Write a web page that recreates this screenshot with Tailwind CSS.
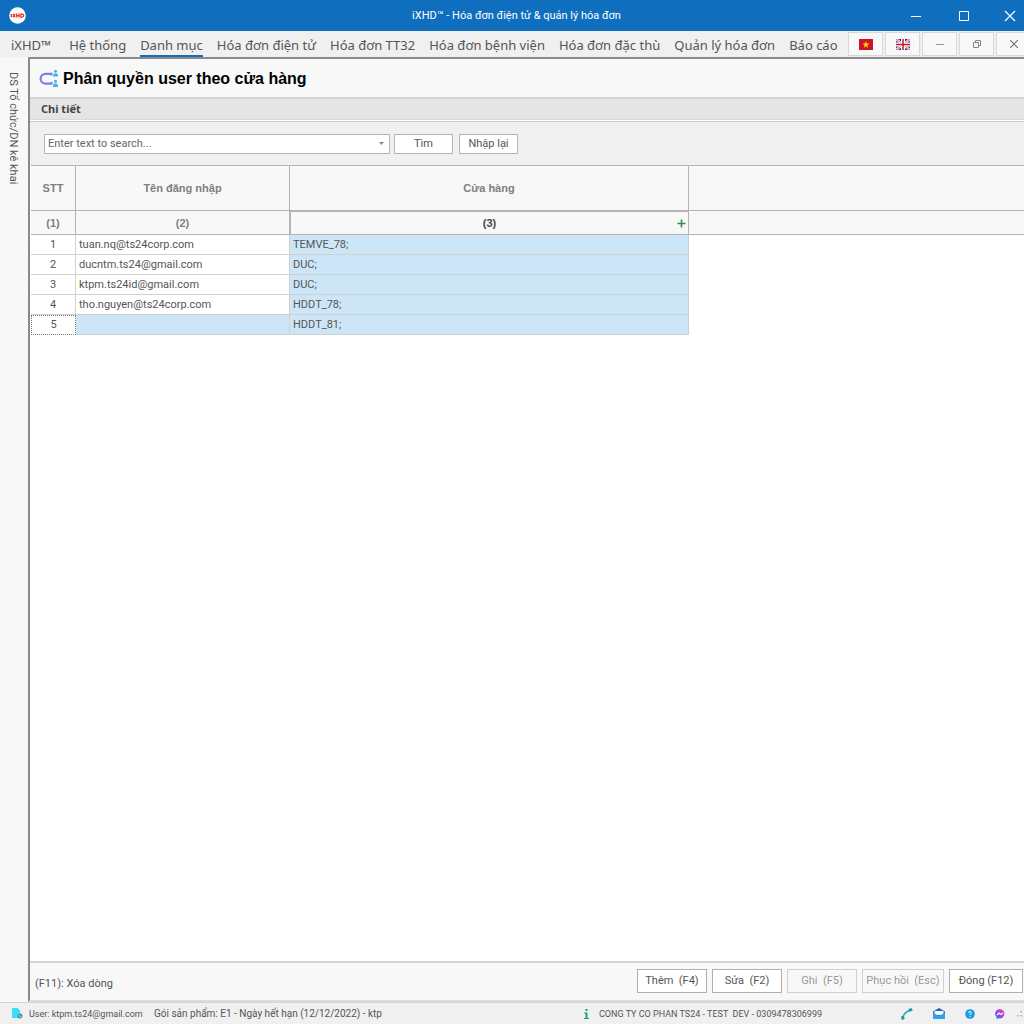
<!DOCTYPE html>
<html lang="vi">
<head>
<meta charset="utf-8">
<title>iXHD™ - Hóa đơn điện tử &amp; quản lý hóa đơn</title>
<script src="https://cdn.jsdelivr.net/npm/@tailwindcss/browser@4"></script>
</head>
<body class="flex h-screen flex-col overflow-hidden bg-[#f0f0f0] font-[Roboto,sans-serif] text-[11px] leading-4 text-[#555]">

<header class="flex h-[31px] shrink-0 items-center bg-[#106ebe] text-white">
  <div class="flex flex-1 pl-[9px]">
    <svg class="size-[17px]" viewBox="0 0 17 17" aria-label="iXHD"><circle cx="8.500" cy="8.500" r="8.300" fill="#fff"/><g fill="none" stroke="#e8352c" stroke-width="1.300"><path d="M2.300 7v3.200M3.800 7l2.400 3.200M6.200 7 3.800 10.200M7.700 6.600v4M10.100 6.600v4M7.700 8.600h2.400M11.900 7.100h1.200q1.700 0 1.700 1.500t-1.700 1.500h-1.200z"/></g></svg>
  </div>
  <h1>iXHD™ - Hóa đơn điện tử &amp; quản lý hóa đơn</h1>
  <div class="flex flex-1 justify-end">
    <button aria-label="Thu nhỏ" class="flex h-[31px] w-12 items-center justify-center"><svg class="size-3" viewBox="0 0 12 12"><path d="M1 6.500h10" stroke="#fff"/></svg></button>
    <button aria-label="Phóng to" class="flex h-[31px] w-12 items-center justify-center"><svg class="size-3" viewBox="0 0 12 12"><path d="M1.500 1.500h9v9h-9z" fill="none" stroke="#fff"/></svg></button>
    <button aria-label="Đóng" class="flex h-[31px] w-9 items-center justify-center pl-2"><svg class="size-3" viewBox="0 0 12 12"><path d="m1 1 10 10M11 1 1 11" stroke="#fff" stroke-width="1.200"/></svg></button>
  </div>
</header>

<nav class="flex h-[26px] shrink-0 items-center justify-between overflow-hidden">
  <div class="flex h-full gap-[14px] pl-[11px] font-['Noto_Sans',sans-serif] text-[13px] leading-[24px] whitespace-nowrap">
    <a href="#" class="mr-1 pt-0.5">iXHD™</a>
    <a href="#" class="pt-0.5">Hệ thống</a>
    <a href="#" class="border-b-2 border-[#106ebe] pt-0.5">Danh mục</a>
    <a href="#" class="pt-0.5">Hóa đơn điện tử</a>
    <a href="#" class="pt-0.5">Hóa đơn TT32</a>
    <a href="#" class="pt-0.5">Hóa đơn bệnh viện</a>
    <a href="#" class="pt-0.5">Hóa đơn đặc thù</a>
    <a href="#" class="pt-0.5">Quản lý hóa đơn</a>
    <a href="#" class="pt-0.5">Báo cáo</a>
  </div>
  <div class="-mr-[7px] flex shrink-0 gap-0.5">
    <button aria-label="Tiếng Việt" class="flex h-6 w-[35px] items-center justify-center border border-[#d8d8d8] bg-[#f8f8f8]"><svg class="h-[11px] w-[14px]" viewBox="0 0 14 11"><path d="M0 0h14v11H0z" fill="#d01128"/><path d="m7 2 .9 2.600h2.600L8.400 6.200l.8 2.600L7 7.200 4.800 8.800l.8-2.600-2.100-1.600h2.600z" fill="#fd0"/></svg></button>
    <button aria-label="English" class="flex h-6 w-[35px] items-center justify-center border border-[#d8d8d8] bg-[#f8f8f8]"><svg class="h-[11px] w-[14px]" viewBox="0 0 14 11"><path d="M0 0h14v11H0z" fill="#2b3a94"/><path d="m0 0 14 11M14 0 0 11" stroke="#fff" stroke-width="2.200"/><path d="m0 0 14 11M14 0 0 11" stroke="#d01128" stroke-width=".7"/><path d="M7 0v11M0 5.500h14" stroke="#fff" stroke-width="4"/><path d="M7 0v11M0 5.500h14" stroke="#d01128" stroke-width="1.500"/></svg></button>
    <button aria-label="Thu nhỏ cửa sổ con" class="flex h-6 w-[35px] items-center justify-center border border-[#d8d8d8] bg-[#f8f8f8]"><svg class="h-[10px] w-2" viewBox="0 0 8 10"><path d="M0 5.500h8" stroke="#999"/></svg></button>
    <button aria-label="Khôi phục cửa sổ con" class="flex h-6 w-[35px] items-center justify-center border border-[#d8d8d8] bg-[#f8f8f8]"><svg class="size-2" viewBox="0 0 8 8"><path d="M.5 2.500h5v5h-5zM2.500 2.500v-2h5v5h-2" fill="none" stroke="#888"/></svg></button>
    <button aria-label="Đóng cửa sổ con" class="flex h-6 w-[35px] items-center justify-center border border-[#d8d8d8] bg-[#f8f8f8]"><svg class="size-2" viewBox="0 0 8 8"><path d="m0 0 8 8M8 0 0 8" stroke="#777" stroke-width="1.200"/></svg></button>
  </div>
</nav>

<div class="flex min-h-0 flex-1">
  <aside class="flex w-7 shrink-0 items-start bg-[#f8f8f8] pt-[15px] pl-[5px]">
    <a href="#" class="whitespace-nowrap [writing-mode:vertical-rl]">DS Tổ chức/DN kê khai</a>
  </aside>
  <main class="flex min-w-0 flex-1 flex-col border-t-2 border-b-2 border-l-2 border-t-[#8a8a8a] border-b-[#dcdcdc] border-l-[#8a8a8a] bg-white">
    <div class="flex h-[38px] shrink-0 items-center gap-1 bg-[#f8f8f8] pt-0.5 pl-[9px]">
      <svg class="h-5 w-5" viewBox="0 0 20 20" fill="none"><path d="M12.500 6.500V4.800H6.500a4.900 4.900 0 0 0 0 9.800h6v-1.600" stroke="#7a80e4" stroke-width="2.200"/><g fill="#3db4ea"><circle cx="16.500" cy="2.300" r="1.500"/><path d="M14 7.500q0-3.200 2.500-3.200t2.500 3.200z"/><circle cx="16.500" cy="12.300" r="1.500"/><path d="M14 18q0-3.700 2.500-3.700t2.500 3.700z"/></g></svg>
      <h2 class="font-['Liberation_Sans',sans-serif] text-base leading-5 font-bold text-black">Phân quyền user theo cửa hàng</h2>
    </div>
    <h3 class="h-[23px] shrink-0 border-t-2 border-b border-t-[#d2d2d2] border-b-[#d8d8d8] bg-[#e5e5e5] pl-[11px] font-['Noto_Sans',sans-serif] leading-[20px] font-bold text-[#444]">Chi tiết</h3>
    <form class="mt-px flex h-[44px] shrink-0 items-center border-t border-[#c8c8c8] bg-[#f0f0f0] pl-[14px]">
      <div class="flex h-5 w-[346px] items-center border border-[#b4b4b4] bg-white">
        <input type="text" aria-label="Tìm kiếm" placeholder="Enter text to search..." class="h-full min-w-0 flex-1 pl-[3px] text-[11px] outline-none placeholder:text-[#666]">
        <button type="button" aria-label="Mở danh sách" class="flex h-full w-[15px] items-center justify-center"><svg class="h-[3px] w-[5px]" viewBox="0 0 5 3"><path d="M0 0h5L2.500 3z" fill="#888"/></svg></button>
      </div>
      <button type="button" class="ml-1 h-5 w-[59px] border border-[#b4b4b4] bg-white">Tìm</button>
      <button type="reset" class="ml-[6px] h-5 w-[59px] border border-[#b4b4b4] bg-white">Nhập lại</button>
    </form>
    <div class="min-h-0 flex-1 pl-px">
      <table class="w-full table-fixed border-separate border-spacing-0 text-left">
        <colgroup><col class="w-[45px]"><col class="w-[214px]"><col class="w-[399px]"><col></colgroup>
        <thead class="bg-[#f8f8f8] text-center font-['Liberation_Sans',sans-serif] text-[#808080]">
          <tr class="h-[46px]">
            <th class="border-y border-r border-[#b4b4b4]">STT</th>
            <th class="border-y border-r border-[#b4b4b4]">Tên đăng nhập</th>
            <th class="border-y border-r border-[#b4b4b4]">Cửa hàng</th>
            <td class="border-y border-[#b4b4b4]"></td>
          </tr>
          <tr class="h-6">
            <th class="border-r border-b border-[#b4b4b4]">(1)</th>
            <th class="border-r border-b border-[#b4b4b4]">(2)</th>
            <th class="relative border-t border-r border-b border-l border-[#b4b4b4] text-[#444]">(3)<button aria-label="Thêm cửa hàng" class="absolute top-[7px] right-[2px]"><svg class="size-[9px]" viewBox="0 0 9 9"><path d="M4.500.5v8M.5 4.500h8" stroke="#2f9148" stroke-width="1.600"/></svg></button></th>
            <td class="border-b border-[#b4b4b4]"></td>
          </tr>
        </thead>
        <tbody>
          <tr class="h-5"><td class="border-r border-b border-[#d0d0d0] text-center">1</td><td class="border-r border-b border-[#d0d0d0] pl-[3px]">tuan.nq@ts24corp.com</td><td class="border-r border-b border-[#d0d0d0] bg-[#cde6f7] pl-[3px]">TEMVE_78;</td><td></td></tr>
          <tr class="h-5"><td class="border-r border-b border-[#d0d0d0] text-center">2</td><td class="border-r border-b border-[#d0d0d0] pl-[3px]">ducntm.ts24@gmail.com</td><td class="border-r border-b border-[#d0d0d0] bg-[#cde6f7] pl-[3px]">DUC;</td><td></td></tr>
          <tr class="h-5"><td class="border-r border-b border-[#d0d0d0] text-center">3</td><td class="border-r border-b border-[#d0d0d0] pl-[3px]">ktpm.ts24id@gmail.com</td><td class="border-r border-b border-[#d0d0d0] bg-[#cde6f7] pl-[3px]">DUC;</td><td></td></tr>
          <tr class="h-5"><td class="border-r border-b border-[#d0d0d0] text-center">4</td><td class="border-r border-b border-[#d0d0d0] pl-[3px]">tho.nguyen@ts24corp.com</td><td class="border-r border-b border-[#d0d0d0] bg-[#cde6f7] pl-[3px]">HDDT_78;</td><td></td></tr>
          <tr class="h-5"><td class="border border-dotted border-[#777] text-center">5</td><td class="border-r border-b border-[#d0d0d0] bg-[#cde6f7]"></td><td class="border-r border-b border-[#d0d0d0] bg-[#cde6f7] pl-[3px]">HDDT_81;</td><td></td></tr>
        </tbody>
      </table>
    </div>
    <div class="flex h-[39px] shrink-0 items-center justify-between border-t-2 border-[#d4d4d4] bg-[#f8f8f8] pl-[5px]">
      <span class="pt-1">(F11): Xóa dòng</span>
      <div class="flex gap-[5px] pr-px pb-0.5 whitespace-pre">
        <button class="h-6 w-[70px] border border-[#b0b0b0] bg-white">Thêm  (F4)</button>
        <button class="h-6 w-[70px] border border-[#b0b0b0] bg-white">Sửa  (F2)</button>
        <button disabled class="h-6 w-[70px] border border-[#d0d0d0] text-[#999]">Ghi  (F5)</button>
        <button disabled class="h-6 w-[82px] border border-[#d0d0d0] text-[#999]">Phục hồi  (Esc)</button>
        <button class="h-6 w-[74px] border border-[#b0b0b0] bg-white">Đóng (F12)</button>
      </div>
    </div>
  </main>
</div>

<footer class="flex h-[22px] shrink-0 items-center border-t border-[#d4d4d4] pl-3 text-[10px] whitespace-pre">
  <svg class="size-[11px]" viewBox="0 0 11 11"><path d="M0 0h5.500L8 2.500V10H0z" fill="#3fdcf5"/><circle cx="8" cy="8" r="2.500" fill="#3a9aa8"/><path d="m6.500 7 3 2.500" stroke="#eee" stroke-width=".7"/></svg>
  <span class="ml-[6px] w-[109px] text-[9px]">User: ktpm.ts24@gmail.com</span>
  <span class="ml-4 flex-1">Gói sản phẩm: E1 - Ngày hết hạn (12/12/2022) - ktp</span>
  <svg class="h-[10px] w-[5px]" viewBox="0 0 5 10"><path d="M1.500 0h2v2h-2zM0 3.500h3.500V9H5v1H0V9h1.500V4.500H0z" fill="#21a366"/></svg>
  <span class="ml-[10px] w-[220px] text-[9px]">CONG TY CO PHAN TS24 - TEST  DEV - 0309478306999</span>
  <div class="ml-[82px] flex items-center gap-5 pr-0.5">
    <a href="#" aria-label="Điện thoại"><svg class="size-3" viewBox="0 0 12 12"><path d="M2 10Q2.500 4 10 2" fill="none" stroke="#22aeb0" stroke-width="1.600"/><path d="m7.500 .8 3.300-.6.9 2.300-3.200 1.300zM.2 8.200l2.800-.4.6 3.200-3 .9z" fill="#1598a0"/></svg></a>
    <a href="#" aria-label="Thư"><svg class="size-3" viewBox="0 0 12 12"><path d="M0 3.500 6 0l6 3.500V11H0z" fill="#1769bd"/><path d="M1.500 3h9v4h-9z" fill="#fff"/><path d="M0 4.500 6 8l6-3.500V11H0z" fill="#2ea3ea"/></svg></a>
    <a href="#" aria-label="Trợ giúp"><svg class="size-[10px]" viewBox="0 0 10 10"><circle cx="5" cy="5" r="4.800" fill="#1b9be6"/><path d="M3.600 3.900Q3.700 2.500 5 2.500t1.300 1.300Q6.300 4.700 5 5.300v.8M5 7v1" fill="none" stroke="#fff"/></svg></a>
    <a href="#" aria-label="Messenger"><svg class="size-[10px]" viewBox="0 0 10 10"><defs><linearGradient id="m" x1="0" y1="1" x2="1" y2="0"><stop stop-color="#1b7cff"/><stop offset=".5" stop-color="#a040f0"/><stop offset="1" stop-color="#ff5c80"/></linearGradient></defs><path d="M5 0a4.700 4.700 0 0 0-3.500 8L1.600 10l1.800-.8A4.700 4.700 0 1 0 5 0z" fill="url(#m)"/><path d="m2 6 2-2 1.700 1.500L8 4" fill="none" stroke="#fff" stroke-width="1.200"/></svg></a>
    <svg class="ml-[-8px] h-[6px] w-[5px]" viewBox="0 0 5 6"><path d="M0 4h1.500v1.500H0zM3.500 4H5v1.500H3.500zM3.500 0H5v1.500H3.500z" fill="#aaa"/></svg>
  </div>
</footer>
</body>
</html>
